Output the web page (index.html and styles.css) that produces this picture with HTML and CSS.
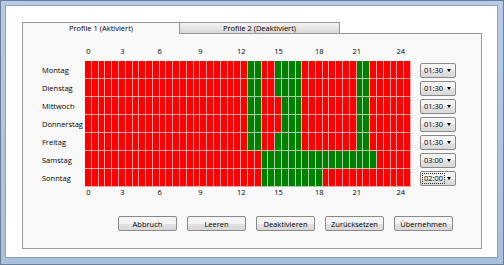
FILE: index.html
```html
<!DOCTYPE html>
<html lang="de">
<head>
    <meta charset="UTF-8">
    <meta name="viewport" content="width=device-width, initial-scale=1.0">
    <title>Zeitprofile</title>
    <link rel="stylesheet" href="styles.css">
</head>
<body>
    <div class="window">
        <div class="client">
            <div class="tabs">
                <div class="tab active">Profile 1 (Aktiviert)</div>
                <div class="tab">Profile 2 (Deaktiviert)</div>
                <div class="tab-fill"></div>
            </div>
            <div class="panel">
                <div class="schedule" id="schedule">
                    <div class="hours top" id="hours-top"></div>
                    <div class="hours" id="hours-bottom"></div>
                </div>
                <div class="buttons">
                    <button type="button">Abbruch</button>
                    <button type="button">Leeren</button>
                    <button type="button">Deaktivieren</button>
                    <button type="button">Zurücksetzen</button>
                    <button type="button">Übernehmen</button>
                </div>
            </div>
        </div>
    </div>
    <script>
        // green = active half hours (index 0..47)
        const days = [
            ['Montag', '01:30', [[24, 25], [28, 31], [40, 41]]],
            ['Dienstag', '01:30', [[24, 25], [28, 31], [40, 41]]],
            ['Mittwoch', '01:30', [[24, 25], [29, 31], [40, 41]]],
            ['Donnerstag', '01:30', [[24, 25], [29, 31], [40, 41]]],
            ['Freitag', '01:30', [[24, 25], [28, 31], [40, 41]]],
            ['Samstag', '03:00', [[26, 42]]],
            ['Sonntag', '02:00', [[26, 34]]]
        ];
        // label text and its centre on a 96 column axis
        const hours = [['0', 1], ['3', 11], ['6', 22], ['9', 34], ['12', 46], ['15', 57], ['18', 69], ['21', 80], ['24', 93]];

        function fillHours(el) {
            hours.forEach(function (h) {
                const span = document.createElement('div');
                span.className = 'hour';
                span.textContent = h[0];
                span.style.gridColumn = h[1] + ' / span 2';
                el.appendChild(span);
            });
        }

        const schedule = document.getElementById('schedule');
        const bottom = document.getElementById('hours-bottom');
        fillHours(document.getElementById('hours-top'));
        fillHours(bottom);

        days.forEach(function (d, i) {
            const row = document.createElement('div');
            row.className = 'row';

            const label = document.createElement('div');
            label.className = 'day';
            label.textContent = d[0];
            row.appendChild(label);

            const cells = document.createElement('div');
            cells.className = 'cells';
            for (let c = 0; c < 48; c++) {
                const cell = document.createElement('div');
                const on = d[2].some(function (r) { return c >= r[0] && c <= r[1]; });
                cell.className = on ? 'cell on' : 'cell';
                cells.appendChild(cell);
            }
            row.appendChild(cells);

            const combo = document.createElement('div');
            combo.className = 'combo';
            combo.innerHTML = '<span class="value">' + d[1] + '</span><span class="arrow"></span>';
            if (i === days.length - 1) {
                combo.classList.add('focused');
            }
            row.appendChild(combo);

            schedule.insertBefore(row, bottom);
        });
    </script>
</body>
</html>
```

FILE: styles.css
```css
body {
    margin: 0;
    font-family: "Open Sans", "Noto Sans", sans-serif;
    font-size: 7.5px;
    color: #000;
}

/* Fensterrahmen */
.window {
    width: 504px;
    height: 265px;
    box-sizing: border-box;
    border: 1px solid #6b7f96;
    background: linear-gradient(#b7cbe4, #a9c0dc);
    padding: 4px 5px 6px 4px;
}

.client {
    height: 100%;
    box-sizing: border-box;
    background: #fff;
    border: 1px solid #8da2bb;
    padding: 16px 0 0 16px;
}

/* Tabs */
.tabs {
    display: flex;
    width: 460px;
    height: 12px;
}

.tab {
    width: 161px;
    box-sizing: border-box;
    border: 1px solid #989898;
    background: linear-gradient(#f3f3f3, #d9d9d9);
    text-align: center;
    line-height: 10px;
}

.tab.active {
    width: 157px;
    border-width: 1px 0 0 1px;
    background: #f9f9f9;
}

.tab-fill {
    flex: 1;
    border-bottom: 1px solid #989898;
}

.panel {
    width: 460px;
    box-sizing: border-box;
    border: 1px solid #989898;
    border-top: none;
    background: #f9f9f9;
    padding: 12px 0 17px 0;
}

/* Zeitraster */
.hours {
    display: grid;
    grid-template-columns: repeat(96, 1fr);
    width: 326px;
    height: 10px;
    margin-left: 62px;
}

.hours.top {
    margin-bottom: 5px;
}

.hour {
    display: flex;
    justify-content: center;
    white-space: nowrap;
    line-height: 10px;
}

.row {
    display: flex;
    align-items: center;
    height: 18px;
}

.day {
    width: 62px;
    box-sizing: border-box;
    padding-left: 19px;
}

.cells {
    display: grid;
    grid-template-columns: repeat(48, 1fr);
    width: 326px;
    height: 18px;
}

.cell {
    background: #ff0000;
    border-right: 1px solid rgba(255, 255, 255, 0.65);
    border-bottom: 1px solid rgba(255, 255, 255, 0.65);
}

.cell.on {
    background: #008000;
}

/* Auswahlfeld */
.combo {
    display: flex;
    align-items: center;
    justify-content: space-between;
    margin-left: 9px;
    width: 36px;
    height: 15px;
    box-sizing: border-box;
    border: 1px solid #8a8a8a;
    border-radius: 2px;
    background: linear-gradient(#f4f4f4 50%, #e3e3e3 50%, #d8d8d8);
    padding: 0 4px 0 2px;
}

.combo .value {
    line-height: 9px;
    padding: 0 1px;
}

.combo.focused .value {
    outline: 1px dotted #333;
}

.arrow {
    width: 0;
    height: 0;
    border-left: 2.5px solid transparent;
    border-right: 2.5px solid transparent;
    border-top: 3px solid #000;
}

/* Buttons */
.buttons {
    display: flex;
    justify-content: flex-end;
    gap: 10px;
    margin-top: 19px;
    padding-right: 28px;
}

button {
    width: 59px;
    height: 15px;
    padding: 0;
    border: 1px solid #8a8a8a;
    border-radius: 2px;
    background: linear-gradient(#f4f4f4 50%, #e3e3e3 50%, #d8d8d8);
    font-family: inherit;
    font-size: 7.5px;
    color: #000;
}
```
